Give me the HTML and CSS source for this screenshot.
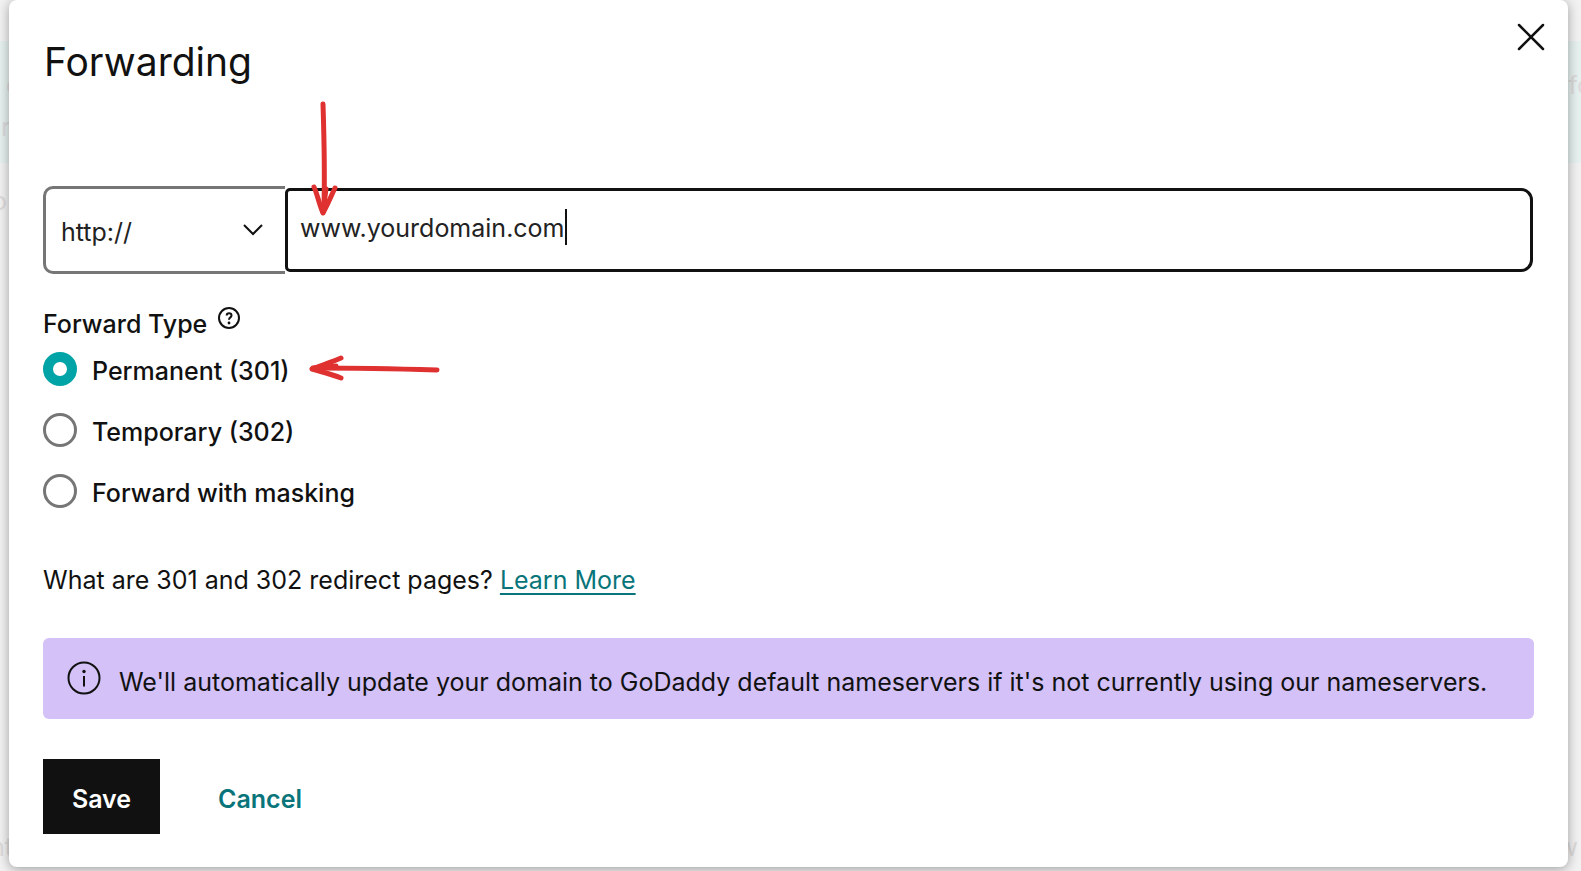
FILE: index.html
```html
<!DOCTYPE html>
<html lang="en">
<head>
<meta charset="utf-8">
<title>Forwarding</title>
<link rel="stylesheet" href="styles.css">
</head>
<body>
<div class="page" aria-hidden="true">
  <div class="band">
    <div class="page-row page-row-first"><span>c</span><span>fo</span></div>
    <div class="page-row page-row-second"><span>or</span></div>
  </div>
  <div class="page-row page-row-mid"><span>o</span></div>
  <div class="page-row page-row-last"><span>nt</span><span>w</span></div>
</div>
<main class="modal" role="dialog" aria-labelledby="title">
  <header class="modal-header">
    <h1 id="title">Forwarding</h1>
    <button class="close" type="button" aria-label="Close">
      <svg width="28" height="28" viewBox="0 0 28 28"><path d="M2 2 26 26M26 2 2 26"/></svg>
    </button>
  </header>
  <form>
    <div class="url-row">
      <div class="protocol">
        <select aria-label="Protocol"><option>http://</option><option>https://</option></select>
        <svg class="chevron" width="20" height="12" viewBox="0 0 20 12"><path d="M1 1 10 10 19 1"/></svg>
      </div>
      <div class="address">
        <input type="text" class="address-input" aria-label="Destination address" value="www.yourdomain.com" size="18">
        <span class="caret"></span>
      </div>
      <svg class="arrow-down" width="28" height="118" viewBox="0 0 28 118"><path d="M12 3C13 35 14 65 13 105" /><path d="M3 86C6 92 8 103 12 112C18 101 20 95 24 87"/><path d="M12 111 15 88"/></svg>
    </div>
    <fieldset>
      <legend>Forward Type
        <svg class="help" width="24" height="24" viewBox="0 0 24 24"><circle cx="12" cy="12" r="10"/><path d="M9.700 9.500C9.700 6.600 14.500 6.600 14.500 9.500C14.500 11.500 12 11.300 12 13.700" stroke-width="2"/><circle class="dot" cx="12" cy="17" r="1.400"/></svg>
      </legend>
      <div class="choice">
        <input type="radio" name="type" id="r301" checked><label for="r301">Permanent (301)</label>
        <svg class="arrow-left" width="132" height="30" viewBox="0 0 132 30"><path d="M129 16C95 15 45 14 8 14"/><path d="M33 4C24 8 14 11 4 15C14 18 23 20 33 24"/><path d="M5 14 28 12"/></svg>
      </div>
      <div class="choice"><input type="radio" name="type" id="r302"><label for="r302">Temporary (302)</label></div>
      <div class="choice"><input type="radio" name="type" id="mask"><label for="mask">Forward with masking</label></div>
    </fieldset>
    <p class="hint">What are 301 and 302 redirect pages? <a href="#">Learn More</a></p>
    <div class="notice">
      <svg class="info" width="34" height="34" viewBox="0 0 34 34"><circle cx="17" cy="17" r="15.500"/><path d="M17 15V25.500"/><circle class="dot" cx="17" cy="10.500" r="1.700"/></svg>
      <span>We'll automatically update your domain to GoDaddy default nameservers if it's not currently using our nameservers.</span>
    </div>
    <div class="actions">
      <button class="save" type="button">Save</button>
      <button class="cancel" type="button">Cancel</button>
    </div>
  </form>
</main>
</body>
</html>
```
FILE: styles.css
```css
* { box-sizing: border-box; }
body {
  margin: 0;
  display: grid;
  min-height: 100vh;
  background: #f2f2f2;
  color: #111;
  font: 25px/36px Inter, "Open Sans", sans-serif;
}
.page, .modal { grid-area: 1 / 1; }
.page {
  display: flex;
  flex-direction: column;
  overflow: hidden;
  padding-top: 41px;
  color: #dddbdb;
}
.band { background: #e6f1f0; height: 122px; padding-top: 26px; }
.page-row { display: flex; justify-content: space-between; height: 42px; }
.page-row-first { margin: 0 -11px 0 6px; }
.page-row-second { margin-left: -14px; }
.page-row-mid { margin-left: -8px; padding-top: 20px; height: 62px; }
.page-row-last { margin: auto 3px 0 -10px; }
.modal {
  position: relative;
  margin: 0 13px 4px 9px;
  padding: 22px 34px 32px;
  background: #fff;
  border-radius: 8px;
  box-shadow: 0 2px 12px rgba(0, 0, 0, .35);
}
.modal-header { display: flex; justify-content: space-between; align-items: flex-start; }
h1 { margin: 16px 0 0; padding-left: 1px; font-size: 39px; line-height: 48px; font-weight: 400; }
button { font: inherit; border: 0; background: none; padding: 0; cursor: pointer; }
svg { fill: none; stroke: #111; stroke-width: 2; flex: none; }
.close { height: 28px; margin: 1px -11px 0 0; }
.close svg { display: block; stroke-linecap: round; stroke-width: 2.500; }
.url-row { position: relative; display: flex; align-items: center; margin-top: 100px; height: 88px; }
.protocol {
  display: flex;
  align-items: center;
  width: 242px;
  height: 88px;
  border: 3px solid #767676;
  border-right: 0;
  border-radius: 10px 0 0 10px;
}
select {
  appearance: none;
  width: 100%;
  height: 100%;
  padding: 4px 15px 0;
  border: 0;
  background: none;
  color: #222;
  font: inherit;
  outline: 0;
}
.chevron { margin: 0 22px 0 -42px; pointer-events: none; }
.address {
  flex: 1;
  display: flex;
  align-items: center;
  height: 84px;
  margin-right: 1px;
  padding: 0 12px 6px;
  border: 3px solid #111;
  border-radius: 5px 12px 12px 5px;
}
.address-input {
  field-sizing: content;
  padding: 2px 0 0;
  border: 0;
  outline: 0;
  background: none;
  color: #222;
  font: inherit;
}
.caret { width: 2px; height: 36px; background: #111; }
.arrow-down { position: absolute; left: 268px; bottom: 55px; }
.arrow-down, .arrow-left { stroke: #e03131; stroke-width: 5; stroke-linecap: round; stroke-linejoin: round; }
fieldset { margin: 32px 0 0; padding: 0; border: 0; }
legend { display: flex; gap: 10px; margin-bottom: -4px; padding: 0; font-weight: 500; }
.dot { fill: #111; stroke: none; }
.choice { display: flex; align-items: center; height: 61px; font-weight: 500; }
.choice input {
  appearance: none;
  width: 34px;
  height: 34px;
  margin: 0 15px 0 0;
  border: 3px solid #767676;
  border-radius: 50%;
}
.choice input:checked { border: 10px solid #00a4a6; }
.choice label { padding-top: 4px; }
.arrow-left { margin-left: 18px; }
.hint { margin: 41px 0 0; }
a { color: #09757a; text-underline-offset: 4px; text-decoration-thickness: 2px; }
.notice {
  display: flex;
  align-items: center;
  gap: 18px;
  margin-top: 40px;
  padding: 22px 12px 23px 24px;
  border-radius: 6px;
  background: #d3c1f7;
}
.notice span { padding-top: 4px; margin-bottom: -4px; }
.actions { display: flex; gap: 58px; margin-top: 40px; }
.save, .cancel { height: 75px; padding-top: 4px; font-weight: 600; }
.save { width: 117px; background: #111; color: #fff; }
.cancel { color: #09757a; }
```
